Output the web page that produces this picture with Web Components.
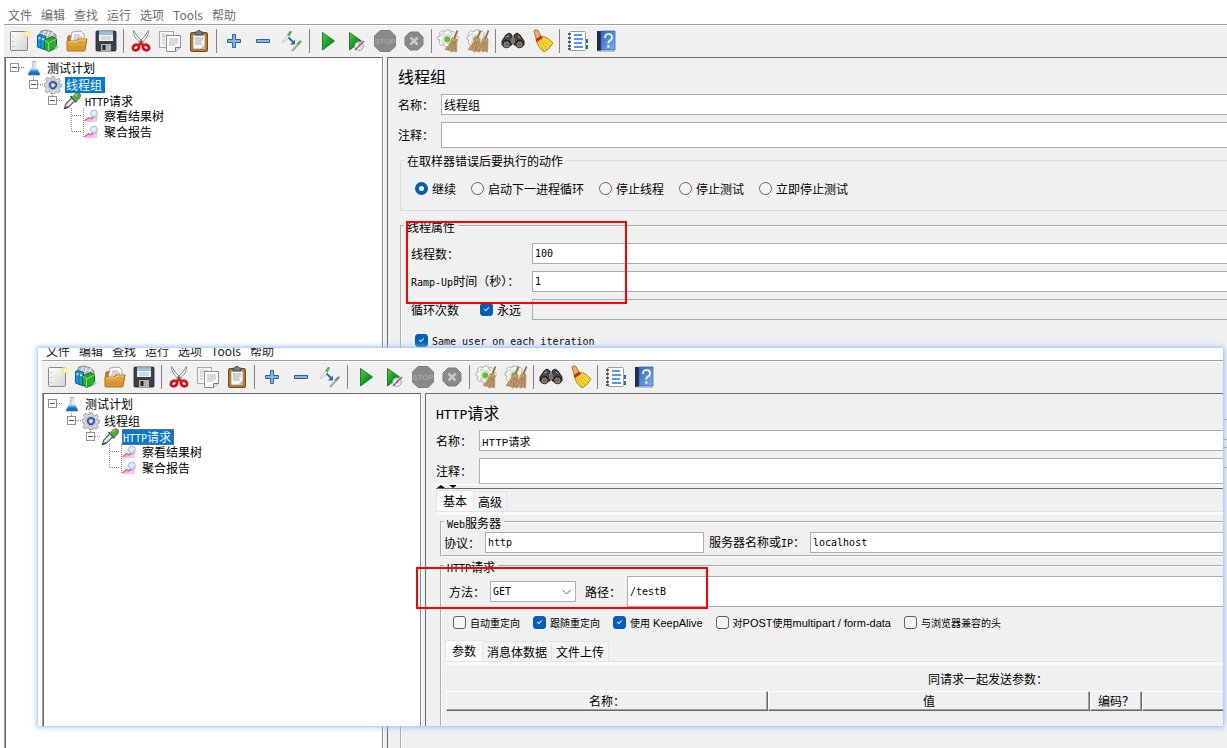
<!DOCTYPE html>
<html lang="zh-CN">
<head>
<meta charset="utf-8">
<title>Apache JMeter</title>
<style>
  html, body { margin: 0; height: 100%; }
  body { background: #fff; overflow: hidden; }
</style>
</head>
<body>
<jm-desktop></jm-desktop>

<script>
const BASE = `
  *, *::before, *::after { box-sizing: border-box; }
  .l { font-family: "DejaVu Sans Mono", monospace; font-size: 10px; }
`;

/* Wraps runs of Latin text so they take the half-width monospace face. */
const mix = s => s.replace(/[ -~]*[!-~][ -~]*/g, m => `<span class="l">${m}</span>`);

class Base extends HTMLElement {
  connectedCallback() {
    if (this.shadowRoot) return;
    this.attachShadow({ mode: 'open' }).innerHTML = `<style>${BASE}${this.css()}</style>${this.html()}`;
  }
  a(name) { return this.getAttribute(name) || ''; }
}

const DROPPER = `<path d="M2 22l1.500-5.500 8.500-9 4 4-8.500 8.500z" fill="#e6e9e7" stroke="#59605c" stroke-width="1.600"/><path d="M2 22l5-2.500" stroke="#444" stroke-width="2"/><path d="M10 5.500l8 8" stroke="#3b5b36" stroke-width="2.600"/><path d="M12 7.500l4-5q4-3 6.500-.500t-.500 6.500l-5 4z" fill="#5aa648" stroke="#39752d"/><path d="M16 5l3-2.500" stroke="#a6dc92" stroke-width="1.500"/>`;
const GEAR_S = `<path d="M9 1h4l.5 2.500L16 2l2.500 2.500L17 7l4 .5v4l-4 .5 1 3-3 2-2-1.500-1 2.500H8l-1-2.500-3 1-2-2.500 1-3-2-.5V7.500L3.500 7 2.500 4 5 1.500 8 3z" fill="#f6f7f6" stroke="#b0b3b0"/><path d="M5 6l2-2M14 4l2 2M5 13l2 2" stroke="#c9ccca" stroke-width="1.500"/><circle cx="10.500" cy="10" r="5" fill="#cfe3c2"/><circle cx="10.300" cy="10.300" r="2.800" fill="#63bd2b"/>`;
const BROOM = `<path d="M20.500 1.500L17 10" stroke="#8d6a43" stroke-width="1.800"/><path d="M15.500 8.500l4.500 1.500-.500 13-3-1-2 1-2-1.500-4.500-1q5-5 7.500-12z" fill="#c39c6d" stroke="#a37a4c" stroke-width=".6"/><path d="M16 12l-4.500 8.500M17 12l-2 10M18.500 12l-.500 10" stroke="#95703f" stroke-width=".7"/>`;

const ICONS = {
  new: `<defs><linearGradient id="g" x2="1" y2="1"><stop stop-color="#fff"/><stop offset="1" stop-color="#d2d3d5"/></linearGradient></defs><rect x="3.500" y="2.500" width="17" height="19" rx="1" fill="url(#g)" stroke="#87898c"/><path d="M6 7v1M6 12v1M6 17v1" stroke="#999"/><circle cx="20" cy="5" r="3.500" fill="#f8eb75" opacity=".6"/><circle cx="20" cy="5" r="2.300" fill="#ffe95a"/><circle cx="20" cy="5" r="1.300" fill="#fffef0"/>`,
  templates: `<path d="M3 6l2-4 5-1 7 2 3 3v7H3z" fill="#b5bfc3" stroke="#6e787d" stroke-width=".8"/><path d="M7 6l2-4M11 7l2-4.500M15 7l2-4" stroke="#e7edf0" stroke-width="1.500"/><path d="M1.500 6.500l3-1 5 2v13.500l-8-3z" fill="#1799d6" stroke="#075b98"/><path d="M5 7v12" stroke="#0b6fae"/><path d="M2.500 9l2 .5M6 10l2 .5" stroke="#d8f4ff" stroke-width="1.500"/><path d="M8.500 11l8-3.500 4 2.500v9l-8 3.500-4-3z" fill="#2bab31" stroke="#116d21"/><path d="M8.500 11l4 3 8-4M12.500 14v8" stroke="#86e064"/><path d="M21 16l2 2-6 4z" fill="#a9c5a9"/>`,
  open: `<path d="M2 8l2-2h6v8H2z" fill="#bd7919"/><path d="M7 3l9-1 3 3v9H5z" fill="#fafafa" stroke="#a5a5a5"/><path d="M9 6h6M9 8h8M8 10h9" stroke="#aaa"/><path d="M2 12h9l2-2h9l-2 11q0 1-1 1H3q-1 0-1-1z" fill="#e0a037" stroke="#b06e12"/><path d="M3 13h9l2-2h7" stroke="#ffd583" fill="none"/><path d="M3 17h17v4H3z" fill="#c98a22" opacity=".45"/>`,
  save: `<rect x="2" y="2" width="20" height="20" rx="1" fill="#3c4046" stroke="#23272b" stroke-width=".8"/><path d="M5 2.500h14V12H5z" fill="#e9f0f5"/><path d="M5 2.500h14V6H5z" fill="#9dbedc"/><path d="M7 8h10M7 10h10" stroke="#b7c1c8"/><path d="M7 15h10v7H7z" fill="#aeb3b6"/><path d="M8.500 16h3v5h-3z" fill="#24282c"/>`,
  cut: `<path d="M4.500 1.500q-.5 6 5.500 11l2.500 3 2-2Q8 8 4.500 1.500zM19.500 1.500q.5 6-5.500 11l-2.500 3-2-2Q16 8 19.500 1.500z" fill="#eef0f0" stroke="#868d90"/><circle cx="12" cy="12.500" r="1" fill="#555"/><g fill="none" stroke="#d3141b" stroke-width="2.800"><ellipse cx="7" cy="18.500" rx="3.200" ry="2.600" transform="rotate(-30 7 18.500)"/><ellipse cx="17" cy="18.500" rx="3.200" ry="2.600" transform="rotate(30 17 18.500)"/><path d="M9.500 16.500l2.500-2 2.500 2"/></g>`,
  copy: `<rect x="1.500" y="2.500" width="14" height="16" fill="#f3f3f3" stroke="#a7a9a8"/><path d="M4 6h8M4 8h3M4 11h3M4 14h3" stroke="#bbb"/><path d="M8.500 6.500h14v12l-5 4h-9z" fill="#fafafa" stroke="#8f9190"/><path d="M11 10h9M11 12h9M11 14h9M11 16h6" stroke="#b7b8b7"/><path d="M17.500 22.500v-4h5" fill="#ddd" stroke="#777"/>`,
  paste: `<rect x="3.500" y="3.500" width="17" height="19" rx="1.500" fill="#b47a2b" stroke="#784915"/><path d="M6 6h12v14H6z" fill="#f6f6f4" stroke="#8d8e8b" stroke-width=".7"/><path d="M8 9h8M8 11h8M8 13h6M8 15h7" stroke="#a9abaa"/><path d="M18 15v5h-5z" fill="#bdbebc"/><path d="M8 6V3h2l1-1.500h2L14 3h2v3z" fill="#777b78" stroke="#4b4e4b"/>`,
  plus: `<path d="M10.500 5.500h3v5h5v3h-5v5h-3v-5h-5v-3h5z" fill="#8ab5e6" stroke="#2d63a7"/>`,
  minus: `<path d="M5.500 10.500h13v3h-13z" fill="#8ab5e6" stroke="#2d63a7"/>`,
  toggle: `<path d="M2 13l6-7 2 2-6.500 5.500z" fill="#eef0ef" stroke="#c3cac6"/><path d="M7 5.500l3-3.500q1.500-.5 2 1L9.500 7.500z" fill="#5da852"/><path d="M8.500 8.500l5 5" stroke="#236ac4" stroke-width="1.800"/><path d="M15 10.500v5h-5z" fill="#236ac4"/><path d="M12 22l6-6.500" stroke="#a2aaa5" stroke-width="2"/><path d="M16.500 14.500l3.500-3q1.500-.5 2 1l-3.500 4z" fill="#5da852"/>`,
  start: `<defs><linearGradient id="g" x2="1" y2="1"><stop stop-color="#65c34b"/><stop offset=".55" stop-color="#12a020"/><stop offset="1" stop-color="#05750d"/></linearGradient></defs><path d="M7.500 3.500v17.500l12-9z" fill="url(#g)" stroke="#148421"/>`,
  startnp: `<defs><linearGradient id="g" x2="1" y2="1"><stop stop-color="#65c34b"/><stop offset=".6" stop-color="#079217"/><stop offset="1" stop-color="#05750d"/></linearGradient></defs><path d="M5.500 3.500v17.500l12-9z" fill="url(#g)" stroke="#148421"/><circle cx="15" cy="17" r="4.300" fill="#edf5fb" stroke="#71a4da"/><path d="M15 13v4l2 1" stroke="#89a7c6" fill="none"/><path d="M11 21l9-9" stroke="#da343e" stroke-width="1.300"/>`,
  stop: `<path d="M7 1.500h10L22.500 7v10L17 22.500H7L1.500 17V7z" fill="#898989" stroke="#808080"/><text x="12" y="15" font-family="Liberation Sans, sans-serif" font-weight="bold" font-size="8" text-anchor="middle" fill="#a6a6a6">STOP</text>`,
  shutdown: `<path d="M8 3h8l5 5v8l-5 5H8l-5-5V8z" fill="#898989" stroke="#808080"/><path d="M8.500 8.500l7 7m0-7l-7 7" stroke="#c9c9c9" stroke-width="2.600"/>`,
  clear: GEAR_S + BROOM,
  clearall: GEAR_S + `<g transform="translate(-6 0)">${BROOM}</g><g transform="translate(2 0)">${BROOM}</g>`,
  search: `<path d="M5 6l3-2 3 2v10H1v-4zM19 6l-3-2-3 2v10h10v-4z" fill="#45484b" stroke="#1e2022"/><path d="M10 9h4v5h-4z" fill="#777"/><path d="M5 8l3-1M17 7l2 2" stroke="#a1a5a8"/><circle cx="5.500" cy="15" r="4.300" fill="#24272a"/><circle cx="18.500" cy="15" r="4.300" fill="#24272a"/><circle cx="5.500" cy="15.500" r="2.600" fill="#925a30" stroke="#aaa" stroke-width=".7"/><circle cx="18.500" cy="15.500" r="2.600" fill="#925a30" stroke="#aaa" stroke-width=".7"/>`,
  broom: `<path d="M4 2.500q0-2 2-1.500l2 .5 3 6-4.500 3z" fill="#e2b85e" stroke="#9e742d"/><path d="M6 11.500l6.500-4.500q6 1.500 10.500 7-3 6-9 9Q8 19 6 11.500z" fill="#f2d636" stroke="#b08a14"/><path d="M9 13l5 9M11 12l6 8.500M13 10.500l6.500 7" stroke="#d0ac22" stroke-width=".8"/><path d="M5.500 10.500l5.500-4 2 2.500-6 4z" fill="#d62328"/>`,
  list: `<path d="M19 10h4v4h-4z" fill="#246ad0"/><path d="M19 16h4v4h-4z" fill="#159520"/><rect x="4.500" y="2.500" width="16" height="19" rx="1" fill="#fff" stroke="#9a9da1"/><path d="M9 6h8M9 10h9M9 14h8M9 18h9" stroke="#2175db" stroke-width="1.400"/><path d="M3 5h3M3 9h3M3 13h3M3 17h3M3 20h3" stroke="#333" stroke-width="1.300"/>`,
  help: `<path d="M3 2h4v20H3z" fill="#212d47"/><defs><linearGradient id="g" x2="1" y2="1"><stop stop-color="#3267b9"/><stop offset="1" stop-color="#78b0f0"/></linearGradient></defs><path d="M7 2h14v19H7z" fill="url(#g)" stroke="#315f9f" stroke-width=".7"/><path d="M4 22h17" stroke="#909eae"/><path d="M11 9q0-4 3.500-4T18 8.500q0 2-2 3t-1.700 3" fill="none" stroke="#fff" stroke-width="1.700"/><circle cx="14.300" cy="17.500" r="1.200" fill="#fff"/>`,
  flask: `<path d="M9.500 2v8L3 20q-1 2.500 2 2.500h14q3 0 2-2.500l-6.500-10V2z" fill="#e4edf5" stroke="#b5c2cf"/><path d="M7 15h10l4 6q0 2-2 2H5q-3 0-1-3z" fill="#1b6ec8"/><path d="M8 14h8l2 3H6z" fill="#66a9e8"/><path d="M8.500 2h7M10.500 4v9" stroke="#9ca9b5"/>`,
  gear: `<path d="M10 1h4l.7 3 2.500 1L20 3l2 3-2 2.500.8 2.500H24v3l-3 1-1 2.500 2 2.500-3 2.500-2.500-1.500-2 .8L14 24h-4l-1-2.500-2.500-.8L4 22.500 1.500 20 3 17l-1-2.500-2-1V10l3-.7 1-2.500L2 4l3-2.500L7.500 4 9.500 3z" fill="#d5d7d8" stroke="#888c91"/><circle cx="12" cy="12" r="6.500" fill="#f8fafc" stroke="#9ea4aa"/><circle cx="12" cy="12" r="4.500" fill="#7e9ed6" stroke="#304f8d" stroke-width="2"/><path d="M10.500 9.500v5l4-2.500z" fill="#fff"/>`,
  dropper: DROPPER,
  chart: `<path d="M1 22q3-7 7-6 3 1 6-3 4-6 8-6v15z" fill="#f5b3e2"/><path d="M1 20l7-5 5 2 5-7" fill="none" stroke="#d2519f" stroke-width="2"/><path d="M12 18l10-2v6H10z" fill="#f9c8ec"/><circle cx="17" cy="8" r="6" fill="#dcebfc" fill-opacity=".9" stroke="#86b1e2" stroke-width="1.500"/>`
};

customElements.define('jm-icon', class extends Base {
  css() { return `:host { display: block; width: var(--icon, 24px); height: var(--icon, 24px); } svg { display: block; width: 100%; height: 100%; }`; }
  html() { return `<svg viewBox="0 0 24 24" fill="none" aria-hidden="true">${ICONS[this.a('name')]}</svg>`; }
});

customElements.define('jm-menu', class extends Base {
  css() { return `
    :host { display: block; }
    nav { display: flex; align-items: flex-end; gap: 9px; height: var(--menu-height, 24px); padding-left: 8px; overflow: hidden; }
    button { all: unset; flex: none; font: 12px/18px "Noto Sans CJK SC", sans-serif; color: var(--menu-color, #6d6d6d); }`; }
  html() { return `<nav>${['文件','编辑','查找','运行','选项','Tools','帮助'].map(t => `<button type="button">${t}</button>`).join('')}</nav>`; }
});

customElements.define('jm-toolbar', class extends Base {
  css() { return `
    :host { display: flex; align-items: center; box-sizing: border-box; height: 32px; padding-bottom: 1px; background: #f0f0f0; border-top: 1px solid #fff; }
    button { all: unset; width: 29px; height: 28px; display: grid; place-items: center; }
    i { width: 1px; height: 24px; margin: 0 2px 0 3px; background: #838383; }`; }
  html() {
    const groups = [['new','templates','open','save'], ['cut','copy','paste'], ['plus','minus','toggle'],
      ['start','startnp','stop','shutdown'], ['clear','clearall'], ['search','broom'], ['list','help']];
    return groups.map(g => g.map(n => `<button type="button" aria-label="${n}"><jm-icon name="${n}"></jm-icon></button>`).join('')).join('<i></i>');
  }
});

customElements.define('jm-node', class extends Base {
  css() { return `
    :host { display: grid; grid-template-columns: 19px 19px max-content; align-items: center; height: 16px;
            margin-left: calc(var(--depth) * 19px); font: 12px/16px "Noto Sans CJK SC", sans-serif; color: #000; }
    .lines { width: 19px; height: 16px; display: block; overflow: visible; }
    jm-icon { --icon: 16px; justify-self: center; }
    jm-icon[name=gear] { --icon: 18px; }
    jm-icon[name=dropper] { --icon: 18px; }
    jm-icon[name=chart] { --icon: 14px; }
    .t { height: 16px; margin-left: 3px; padding: 0 1px; }
    .sel { background: #0078d7; color: #fff; padding-right: 3px; }
    .focus { outline: 1px dotted #c46a1c; outline-offset: -1px; }`; }
  html() {
    const d = +this.a('depth'), leaf = this.hasAttribute('leaf'), last = this.hasAttribute('last');
    this.style.setProperty('--depth', d);
    const dash = 'stroke="#8a8a8a" stroke-dasharray="1 1"';
    const up = d ? `<path d="M9.500 0V${leaf && !last ? 16 : 8}" ${dash}/>` : '';
    const side = leaf ? `<path d="M21.500 0V${last ? 14 : 16}" ${dash}/>` : '';
    const box = leaf ? '' : `<rect x="5.500" y="3.500" width="8" height="8" fill="#fff" stroke="#919191"/><path d="M7 7.500h5" stroke="#3657a0"/>`;
    return `<svg class="lines" viewBox="0 0 19 16" fill="none" aria-hidden="true">${up}${side}<path d="M10 7.500H20" ${dash}/>${box}</svg>
      <jm-icon name="${this.a('icon')}"></jm-icon>
      <span class="t ${this.hasAttribute('selected') ? 'sel' : ''} ${this.hasAttribute('focused') ? 'focus' : ''}">${mix(this.a('label'))}</span>`;
  }
});

/* Application window: menu, toolbar, tree at the left and the slotted editor at the right. */
customElements.define('jm-window', class extends Base {
  css() { return `
    :host { display: flex; flex-direction: column; background: #fff; overflow: hidden; }
    .frame { flex: 1; display: flex; flex-direction: column; min-height: 0; margin-left: 4px; border-top: 1px solid #a0a0a0; }
    .main { flex: 1; display: flex; min-height: 0; background: #f0f0f0; }
    .tree { flex: none; width: 379px; padding: 2px 0 0 0; background: #fff; border-left: 1px solid #a0a0a0; border-top: 1px solid #696969;
            border-right: 1px solid #828790; box-shadow: inset 1px 0 #696969; }
    .edge { flex: none; width: 4px; border-left: 1px solid #fff; }
    .panel { flex: 1; min-width: 0; display: flex; flex-direction: column; overflow: hidden; border-left: 1px solid #696969; border-top: 1px solid #696969; }
    ::slotted(*) { flex: 1; }`; }
  html() {
    const s = this.a('active');
    return `<jm-menu></jm-menu><div class="frame"><jm-toolbar></jm-toolbar><div class="main">
      <div class="tree">
        <jm-node depth="0" icon="flask" label="测试计划"></jm-node>
        <jm-node depth="1" icon="gear" label="线程组" ${s === 'group' ? 'selected' : ''}></jm-node>
        <jm-node depth="2" icon="dropper" label="HTTP请求" ${s === 'http' ? 'selected focused' : ''}></jm-node>
        <jm-node depth="3" icon="chart" label="察看结果树" leaf></jm-node>
        <jm-node depth="3" icon="chart" label="聚合报告" leaf last></jm-node>
      </div><div class="edge"></div><div class="panel"><slot></slot></div></div></div>`;
  }
});

const FORM = `
  :host { display: block; font: 12px/14px "Noto Sans CJK SC", sans-serif; color: #000; }
  label { white-space: nowrap; }
  input { display: block; width: 100%; min-width: 0; height: 21px; margin: 0; padding: 0 2px; border: 1px solid #abadb3; border-radius: 0;
          background: #fff; color: #000; outline: 0; font: 12px/14px "Noto Sans CJK SC", sans-serif; }
  input.latin, select { font: 10px/14px "DejaVu Sans Mono", monospace; }
  input.mixed { font: 11px/14px "Liberation Mono", "Noto Sans CJK SC", monospace; }
  input:disabled { background: #f0f0f0; }
  .open { border-right: 0; }
`;

customElements.define('jm-head', class extends Base {
  css() { return FORM + `
    h1 { height: 36px; margin: 0; padding: 8px 0 0 10px; font: 16px/20px "Noto Sans CJK SC", sans-serif; }
    h1 .l { font-size: 13px; line-height: 14px; }
    .g { display: grid; grid-template-columns: 43px 1fr; row-gap: 7px; align-items: center; padding-left: 10px; }
    .note { height: 26px; }`; }
  html() { const n = this.a('name'); return `<h1>${mix(n)}</h1><div class="g">
    <label for="n">名称：</label><input id="n" class="open ${/[A-Z]/.test(n) ? 'mixed' : ''}" value="${n}">
    <label for="c">注释：</label><input id="c" class="open note"></div>`; }
});

customElements.define('jm-group', class extends Base {
  css() { return `
    :host { display: block; font: 12px/14px "Noto Sans CJK SC", sans-serif; }
    fieldset { margin: 0; min-width: 0; height: 100%; padding: 0 0 var(--pad-bottom, 0) 2px; border: 2px groove #fff; border-right: 0; }
    :host([light]) fieldset { border: 1px solid #dcdcdc; border-right: 0; padding-left: 3px; }
    :host([endless]) fieldset { border-bottom: 0; }
    legend { padding: 0 3px; height: 14px; line-height: 16px; white-space: nowrap; }`; }
  html() { return `<fieldset><legend>${mix(this.a('label'))}</legend><slot></slot></fieldset>`; }
});

customElements.define('jm-option', class extends Base {
  css() { return `
    :host { display: block; font: 12px/14px "Noto Sans CJK SC", sans-serif; }
    :host([small]) { font-size: 10px; }
    :host([small]) .l { font-family: "Liberation Sans", sans-serif; font-size: 11px; }
    label { display: flex; align-items: center; gap: 4px; height: 13px; white-space: nowrap; }
    input { appearance: none; flex: none; position: relative; width: 13px; height: 13px; margin: 0; border: 1px solid #626262; border-radius: 3px; background: #f5f5f5; }
    input[type=radio] { border-radius: 50%; }
    input:checked { background: #005fb8; border-color: #005fb8; }
    input[type=radio]:checked { background: #fff; border-width: 4px; }
    input[type=checkbox]:checked::after { content: ""; position: absolute; left: 4px; top: 2px; width: 3px; height: 5px; border: solid #cfe4f7; border-width: 0 1px 1px 0; transform: rotate(45deg); }`; }
  html() { return `<label><input type="${this.a('type') || 'checkbox'}" ${this.hasAttribute('checked') ? 'checked' : ''}><span>${mix(this.a('label'))}</span></label>`; }
});

customElements.define('jm-thread-group', class extends Base {
  css() { return FORM + `
    :host { display: flex; flex-direction: column; }
    .actions { margin: 5px 0 8px 12px; --pad-bottom: 15px; }
    .radios { display: flex; gap: 15px; padding: 15px 0 0 11px; }
    .props { flex: 1; margin-left: 12px; }
    .grid { display: grid; grid-template-columns: 121px 1fr; row-gap: 7px; align-items: center; padding: 10px 0 0 7px; }
    .loop { display: grid; grid-template-columns: 69px 1fr; align-items: center; }
    .same { padding: 14px 0 72px 11px; }
    .times { display: grid; gap: 7px; padding-left: 128px; }`; }
  html() { return `<jm-head name="线程组"></jm-head>
    <jm-group class="actions" light label="在取样器错误后要执行的动作"><div class="radios">
      <jm-option type="radio" label="继续" checked></jm-option><jm-option type="radio" label="启动下一进程循环"></jm-option>
      <jm-option type="radio" label="停止线程"></jm-option><jm-option type="radio" label="停止测试"></jm-option>
      <jm-option type="radio" label="立即停止测试"></jm-option></div></jm-group>
    <jm-group class="props" endless label="线程属性">
      <div class="grid">
        <label for="t">线程数：</label><input id="t" class="latin open" value="100">
        <label for="r">${mix('Ramp-Up')}时间（秒）：</label><input id="r" class="latin open" value="1">
        <div class="loop"><label for="k">循环次数</label><jm-option label="永远" checked></jm-option></div><input id="k" class="latin open" disabled>
      </div>
      <div class="same"><jm-option label="Same user on each iteration" checked></jm-option></div>
      <div class="times"><input class="open" disabled aria-label="持续时间"><input class="open" disabled aria-label="启动延迟"></div>
    </jm-group>`; }
});

customElements.define('jm-tabs', class extends Base {
  css() { return `
    :host { display: block; font: 12px/14px "Noto Sans CJK SC", sans-serif; }
    .strip { display: flex; align-items: flex-end; }
    button { all: unset; box-sizing: border-box; height: 20px; padding: 1px 4px 0; line-height: 18px; border: 1px solid #e3e3e3; border-bottom: 0; background: #f3f3f3; white-space: nowrap; }
    button + button + button { border-left: 0; }
    button[aria-selected=true] { height: 21px; padding: 0 6px; background: #fafafa; border-right: 0; }
    .band { height: 4px; border-top: 1px solid #e3e3e3; background: #fafafa; }`; }
  html() { return `<div class="strip" role="tablist">${this.a('items').split(',').map((t, i) => `<button type="button" role="tab" aria-selected="${!i}">${t}</button>`).join('')}</div><div class="band"></div><slot></slot>`; }
});

customElements.define('jm-params', class extends Base {
  css() { return `
    :host { display: block; overflow: hidden; }
    table { width: 1084px; table-layout: fixed; border-spacing: 0; font: 12px/16px "Noto Sans CJK SC", sans-serif; }
    caption { padding: 6px 0 4px; }
    .p { width: 322px; } .e { width: 52px; }
    th { height: 20px; padding: 0; font-weight: 400; border: solid; border-width: 1px 1px 1px 1px; border-color: #fff #696969 #696969 #fff; box-shadow: inset -1px -1px #a0a0a0; }`; }
  html() { return `<table><caption>同请求一起发送参数：</caption><thead><tr><th class="p">名称：</th><th class="p">值</th><th class="e">编码？</th><th></th></tr></thead></table>`; }
});

customElements.define('jm-http', class extends Base {
  css() { return FORM + `
    .split { height: 5px; margin-left: 10px; border-top: 1px solid #fff; border-bottom: 1px solid #696969; }
    .split svg { display: block; width: 20px; height: 3px; }
    .main { margin: 1px 0 0 10px; }
    .web, .req { display: block; margin-left: 4px; }
    .web { --pad-bottom: 2px; margin-bottom: 2px; }
    .row { display: grid; align-items: center; padding-top: 3px; }
    .r1 { grid-template-columns: 41px 219px 106px 1fr; }
    .r1 label + input + label { padding-left: 5px; }
    .r2 { grid-template-columns: 41px 86px 51px 1fr; padding-left: 5px; }
    .r2 .path { padding-left: 9px; }
    .tall { height: 31px; }
    .sel { position: relative; }
    .sel svg { position: absolute; right: 5px; top: 8px; width: 9px; height: 6px; pointer-events: none; }
    select { appearance: none; display: block; width: 100%; height: 21px; padding: 0 2px; border: 1px solid #abadb3; border-radius: 0; background: #fff; color: #000; }
    .checks { display: flex; gap: 13px; padding: 9px 0 11px 9px; }
    .sub { margin-left: 1px; padding-bottom: 40px; }
    .sub jm-params { margin-left: 1px; }`; }
  html() { return `<jm-head name="HTTP请求"></jm-head>
    <div class="split"><svg viewBox="0 0 20 3" aria-hidden="true"><path d="M1 3l4-3 4 3zM13 0h8l-4 3z"/></svg></div>
    <jm-tabs class="main" items="基本,高级">
      <jm-group class="web" label="Web服务器"><div class="row r1">
        <label for="p">协议：</label><input id="p" class="latin" value="http">
        <label for="s">服务器名称或${mix('IP')}：</label><input id="s" class="latin open" value="localhost"></div></jm-group>
      <jm-group class="req" endless label="HTTP请求">
        <div class="row r2"><label for="m">方法：</label>
          <div class="sel"><select id="m"><option>GET</option></select><svg viewBox="0 0 9 6" aria-hidden="true"><path d="M.5 1l4 4 4-4" fill="none" stroke="#666"/></svg></div>
          <label class="path" for="u">路径：</label><input id="u" class="latin open tall" value="/testB"></div>
        <div class="checks"><jm-option small label="自动重定向"></jm-option><jm-option small label="跟随重定向" checked></jm-option>
          <jm-option small label="使用 KeepAlive" checked></jm-option><jm-option small label="对POST使用multipart / form-data"></jm-option>
          <jm-option small label="与浏览器兼容的头"></jm-option></div>
        <jm-tabs class="sub" items="参数,消息体数据,文件上传"><jm-params></jm-params></jm-tabs>
      </jm-group>
    </jm-tabs>`; }
});

/* Two overlapping windows, each with a red frame over the fields of interest. */
customElements.define('jm-desktop', class extends Base {
  css() { return `
    :host { display: block; position: relative; height: 100%; overflow: hidden; }
    .back { height: 100%; }
    .front { position: absolute; left: 38px; top: 348px; right: 4px; bottom: 22px; --menu-height: 12px; --menu-color: #222; }
    .glow { position: absolute; left: 38px; top: 348px; right: 4px; bottom: 22px; box-shadow: 0 0 1px #8fbdf2, 0 0 6px 1px #94c0f5; }
    .mark { position: absolute; border: 2px solid #f00; pointer-events: none; }
    .m1 { left: 406px; top: 221px; width: 221px; height: 83px; }
    .m2 { left: 416px; top: 567px; width: 292px; height: 42px; }`; }
  html() { return `
    <jm-window class="back" active="group"><jm-thread-group></jm-thread-group></jm-window>
    <div class="mark m1"></div><div class="glow"></div>
    <jm-window class="front" active="http"><jm-http></jm-http></jm-window>
    <div class="mark m2"></div>`; }
});
</script>
</body>
</html>
